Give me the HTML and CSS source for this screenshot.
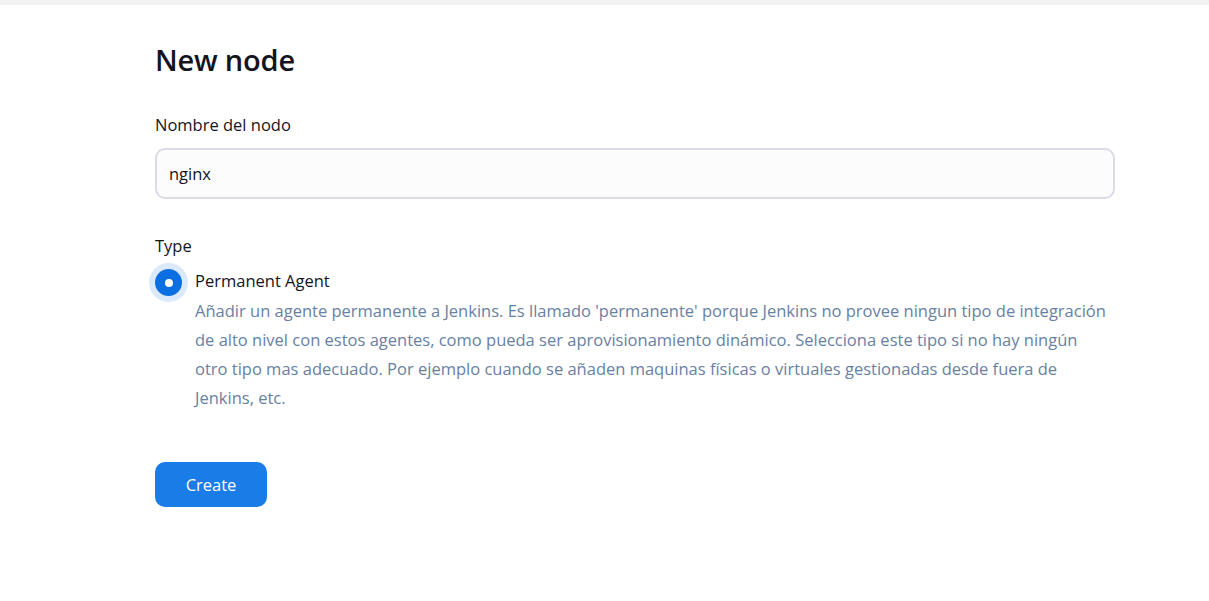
FILE: index.html
```html
<!DOCTYPE html>
<html lang="es">
<head>
<meta charset="utf-8">
<title>New node</title>
<link rel="stylesheet" href="styles.css">
</head>
<body>
<div class="topbar"></div>
<main class="page">
  <h1 class="title">New node</h1>
  <div class="field">
    <label class="label" for="name">Nombre del nodo</label>
    <input class="input" id="name" type="text" value="nginx">
  </div>
  <div class="field type-field">
    <div class="label">Type</div>
    <div class="option">
      <span class="radio"><span class="dot"></span></span>
      <div class="option-body">
        <div class="option-title">Permanent Agent</div>
        <p class="option-desc">Añadir un agente permanente a Jenkins. Es llamado 'permanente' porque Jenkins no provee ningun tipo de integración de alto nivel con estos agentes, como pueda ser aprovisionamiento dinámico. Selecciona este tipo si no hay ningún otro tipo mas adecuado. Por ejemplo cuando se añaden maquinas físicas o virtuales gestionadas desde fuera de Jenkins, etc.</p>
      </div>
    </div>
  </div>
  <button class="btn" type="button">Create</button>
</main>
</body>
</html>
```
FILE: styles.css
```css
* { box-sizing: border-box; }
html, body { margin: 0; padding: 0; background: #fff; }
body {
  font-family: "Open Sans", "Noto Sans", sans-serif;
  color: #14141f;
  font-size: 16.5px;
}
.topbar { height: 5px; background: #f2f2f3; }
.page {
  width: 960px;
  margin-left: 155px;
  padding-top: 36px;
  display: flex;
  flex-direction: column;
}
.title {
  margin: 0 0 35px;
  font-size: 29px;
  font-weight: 600;
  line-height: 38px;
  letter-spacing: -0.2px;
}
.field { display: flex; flex-direction: column; }
.label {
  font-size: 16.5px;
  line-height: 22px;
  margin-bottom: 12px;
}
.input {
  height: 51px;
  width: 960px;
  border: 2px solid #d9dbe6;
  border-radius: 10px;
  background: #fcfcfc;
  padding: 0 12px;
  font-family: inherit;
  font-size: 16.5px;
  color: #14141f;
  outline: none;
}
.type-field { margin-top: 36px; }
.type-field .label { margin-bottom: 14px; }
.option { display: flex; align-items: flex-start; gap: 13px; }
.radio {
  flex: none;
  width: 27px;
  height: 27px;
  border-radius: 50%;
  background: #0b6fe2;
  box-shadow: 0 0 0 6px #dbe9fb;
  display: flex;
  align-items: center;
  justify-content: center;
  margin-top: -2px;
}
.dot { width: 8px; height: 8px; border-radius: 50%; background: #fff; }
.option-body { display: flex; flex-direction: column; flex: 1; }
.option-title { line-height: 24px; margin-top: -2px; }
.option-desc {
  margin: 3px 0 0;
  max-width: 915px;
  color: #6781a3;
  line-height: 29px;
}
.btn {
  align-self: flex-start;
  margin-top: 50px;
  width: 112px;
  height: 45px;
  border: none;
  border-radius: 10px;
  background: #1a7ce6;
  color: #fff;
  font-family: inherit;
  font-size: 16.5px;
}
```
